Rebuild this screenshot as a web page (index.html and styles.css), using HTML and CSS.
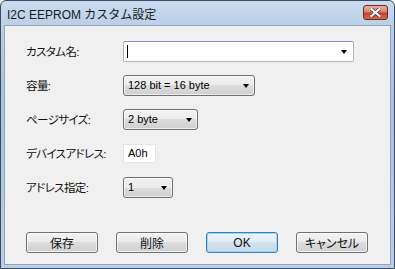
FILE: index.html
```html
<!DOCTYPE html>
<html>
<head>
    <title>I2C EEPROM カスタム設定</title>
    <link rel="stylesheet" href="styles.css">
</head>
<body>
    <div class="window">
        <div class="titlebar">
            <span class="title">I2C EEPROM カスタム設定</span>
            <span class="close-btn">
                <svg width="11" height="9" viewBox="0 0 11 9">
                    <path d="M1.5 1 L9.5 8 M9.5 1 L1.5 8" stroke="#5a1a10" stroke-width="3.6" stroke-linecap="square"/>
                    <path d="M1.5 1 L9.5 8 M9.5 1 L1.5 8" stroke="#fff" stroke-width="2.2" stroke-linecap="square"/>
                </svg>
            </span>
        </div>

        <div class="client">
            <div class="form">
                <div class="row">
                    <label class="label">カスタム名:</label>
                    <div class="combo-edit">
                        <span class="caret"></span>
                        <span class="arrow"></span>
                    </div>
                </div>
                <div class="row">
                    <label class="label">容量:</label>
                    <div class="combo combo-size">
                        <span class="combo-text">128 bit = 16 byte</span>
                        <span class="arrow"></span>
                    </div>
                </div>
                <div class="row">
                    <label class="label">ページサイズ:</label>
                    <div class="combo combo-page">
                        <span class="combo-text">2 byte</span>
                        <span class="arrow"></span>
                    </div>
                </div>
                <div class="row">
                    <label class="label">デバイスアドレス:</label>
                    <div class="textbox">A0h</div>
                </div>
                <div class="row">
                    <label class="label">アドレス指定:</label>
                    <div class="combo combo-addr">
                        <span class="combo-text">1</span>
                        <span class="arrow"></span>
                    </div>
                </div>
            </div>

            <div class="buttons">
                <button class="btn">保存</button>
                <button class="btn">削除</button>
                <button class="btn btn-default">OK</button>
                <button class="btn">キャンセル</button>
            </div>
        </div>
    </div>
</body>
</html>
```

FILE: styles.css
```css
body {
    margin: 0;
    font-family: "Liberation Sans", "Noto Sans CJK JP", sans-serif;
    font-size: 12px;
    color: #000;
    background-color: #ffffff;
}

.window {
    box-sizing: border-box;
    width: 395px;
    height: 269px;
    border: 1px solid #3b4a5e;
    border-radius: 6px 6px 0 0;
    padding: 0 3px 3px 3px;
    background: linear-gradient(#cadbef, #b6cbe5 12%, #aac2df 40%, #b9cfe8);
    overflow: hidden;
}

/* Title bar */
.titlebar {
    height: 24px;
    display: flex;
    align-items: center;
    justify-content: space-between;
}

.title {
    padding-left: 3px;
    font-size: 12px;
    color: #1a1a1a;
    margin-top: 1px;
}

.close-btn {
    width: 23px;
    height: 13px;
    margin-right: 3px;
    margin-top: -1px;
    border: 1px solid #6b2a1e;
    border-radius: 3px;
    background: linear-gradient(#eab0a1, #d9826c 45%, #c4432a 55%, #d46a4c);
    display: flex;
    align-items: center;
    justify-content: center;
}

/* Client area */
.client {
    box-sizing: border-box;
    height: 240px;
    border: 1px solid #8da3bf;
    background-color: #f0f0f0;
    padding: 8px 0 0 21px;
}

.row {
    height: 34px;
    display: flex;
    align-items: center;
}

.label {
    width: 97px;
    font-size: 11.5px;
    font-feature-settings: "palt";
    letter-spacing: -0.6px;
    color: #111;
}

.combo-edit {
    position: relative;
    box-sizing: border-box;
    width: 231px;
    height: 21px;
    background-color: #fff;
    border: 1px solid #abb5c1;
    border-top-color: #8297ad;
    border-radius: 2px;
}

.caret {
    position: absolute;
    left: 3px;
    top: 3px;
    width: 1px;
    height: 13px;
    background-color: #000;
}

.arrow {
    position: absolute;
    right: 6px;
    top: 8px;
    width: 0;
    height: 0;
    border-left: 3.5px solid transparent;
    border-right: 3.5px solid transparent;
    border-top: 4px solid #000;
}

.combo {
    position: relative;
    box-sizing: border-box;
    height: 21px;
    border: 1px solid #707070;
    border-radius: 3px;
    background: linear-gradient(#f2f2f2, #ebebeb 50%, #dddddd 50%, #cfcfcf);
    box-shadow: inset 0 0 0 1px rgba(255,255,255,0.6);
    display: flex;
    align-items: center;
    padding-left: 4px;
}

.combo .arrow {
    right: 5px;
}

.combo-text {
    font-size: 11px;
}

.combo-size {
    width: 132px;
}

.combo-page {
    width: 75px;
}

.combo-addr {
    width: 50px;
}

.textbox {
    box-sizing: border-box;
    width: 33px;
    height: 19px;
    background-color: #fff;
    border: 1px solid #e2e6ea;
    font-size: 11px;
    padding-left: 4px;
    line-height: 17px;
}

/* Buttons */
.buttons {
    display: flex;
    gap: 18px;
    margin-top: 28px;
    padding-left: 0;
}

.btn {
    box-sizing: border-box;
    width: 72px;
    height: 21px;
    border: 1px solid #707070;
    border-radius: 3px;
    background: linear-gradient(#f2f2f2, #ebebeb 50%, #dddddd 50%, #cfcfcf);
    box-shadow: inset 0 0 0 1px rgba(255,255,255,0.7);
    font-family: "Liberation Sans", "Noto Sans CJK JP", sans-serif;
    font-size: 12px;
    font-feature-settings: "palt";
    color: #111;
    padding: 0;
}

.btn-default {
    border-color: #3c7fb1;
    background: linear-gradient(#edf4fa, #e1ecf5 50%, #d2e2ef 50%, #c6dae9);
    box-shadow: inset 0 0 0 1px #9fd2ee;
}
```
